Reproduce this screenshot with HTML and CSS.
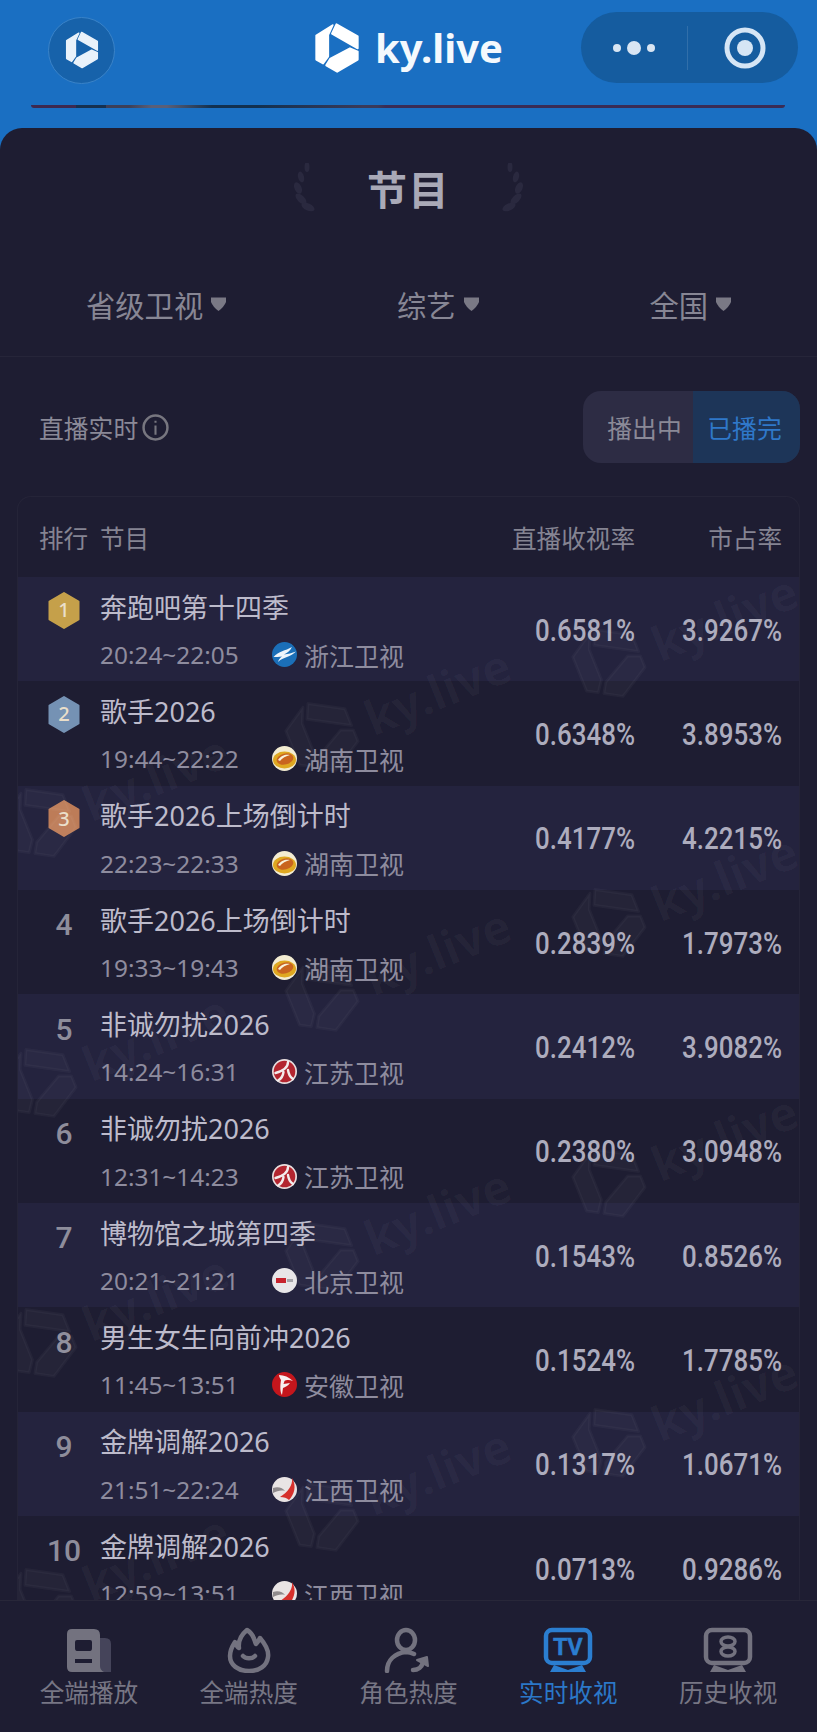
FILE: index.html
```html
<!DOCTYPE html>
<html lang="zh-CN">
<head>
<meta charset="utf-8">
<title>ky.live 节目</title>
<link rel="stylesheet" href="styles.css">
</head>
<body>
<svg class="defs" width="0" height="0" aria-hidden="true">
  <defs>
    <symbol id="logo" viewBox="-4 -4 143 162">
      <g fill="currentColor" stroke="currentColor" stroke-width="6" stroke-linejoin="round">
        <path d="M66 3 L132 41 V78 L52 32 Z"/>
        <path d="M132 88 V113 L68 151 L34 131 L46 111 L108 78 Z"/>
        <path d="M54 6 L3 38 V113 L24 125 L40 103 V36 Z"/>
      </g>
    </symbol>
    <symbol id="hex" viewBox="0 0 32 37">
      <path d="M16 1 L30.5 9.5 V27.5 L16 36 L1.5 27.5 V9.5 Z" fill="currentColor" stroke="currentColor" stroke-linejoin="round" stroke-width="2"/>
    </symbol>
    <symbol id="ch-zj" viewBox="0 0 25 25">
      <circle cx="12.5" cy="12.5" r="12.5" fill="#1b6fb8"/>
      <path d="M1.500 15 C7 9 13 9 20 5 C18 9 15 11 12 12.500 C16 12 20 11 24 9.500 C19 15 11 15 6 20 C7 17 8 16 10 14.500 C7 15 4 15 1.500 15 Z" fill="#eef5fb"/>
    </symbol>
    <symbol id="ch-hn" viewBox="0 0 25 25">
      <circle cx="12.5" cy="12.5" r="12.5" fill="#f3ecd2"/>
      <ellipse cx="12.5" cy="14" rx="11.500" ry="8.500" fill="#dfa821"/>
      <ellipse cx="13" cy="13" rx="8.500" ry="5.500" fill="#c9641f" transform="rotate(-14 13 13)"/>
      <path d="M6 14 C9 9 14 8 18 9 C14 10 10 12 8 15 Z" fill="#f8f1da"/>
    </symbol>
    <symbol id="ch-js" viewBox="0 0 25 25">
      <circle cx="12.5" cy="12.5" r="12.5" fill="#e9dfdf"/>
      <circle cx="12.5" cy="12.5" r="10.800" fill="#b3252f"/>
      <path d="M16 3 C16 9 11 12 3.500 14 M11.500 13 C11 17 9 20 6 21.500 M16 11 C16.500 15 18 18 21 20" fill="none" stroke="#f3ecec" stroke-width="2.400" stroke-linecap="round"/>
    </symbol>
    <symbol id="ch-bj" viewBox="0 0 25 25">
      <circle cx="12.5" cy="12.5" r="12.5" fill="#e8e6e8"/>
      <rect x="4" y="10" width="10" height="5" fill="#c7232d"/>
      <rect x="15" y="11" width="6" height="3" fill="#a5a4a9"/>
    </symbol>
    <symbol id="ch-ah" viewBox="0 0 25 25">
      <circle cx="12.5" cy="12.5" r="12.5" fill="#c4161c"/>
      <path d="M7 3 C12 3 17 5 21 9 C17 7.500 14 8 12.500 9 L11.500 12 L18 11 C16 14 13 15 11 16 L10 23 C8 20 8 14 9 8 C8 6 7 5 7 3 Z" fill="#f7eeee"/>
    </symbol>
    <symbol id="ch-jx" viewBox="0 0 25 25">
      <circle cx="12.5" cy="12.5" r="12.5" fill="#e9e4e4"/>
      <path d="M20 1 C21 8 16 15 8 20 C12 20 15 21 17 23 C22 18 25 9 20 1 Z" fill="#d6302c"/>
      <path d="M1 11 C6 9 11 11 13 14 C9 13 5 14 1 16 Z" fill="#8f8a8c"/>
    </symbol>
  </defs>
</svg>

<div class="app">
  <header class="topbar">
    <div class="topbar-row">
      <div class="avatar"><svg class="avatar-logo"><use href="#logo"/></svg></div>
      <div class="brand">
        <svg class="brand-logo"><use href="#logo"/></svg>
        <span class="brand-text">ky.live</span>
      </div>
      <div class="capsule">
        <div class="capsule-part">
          <svg width="44" height="16" viewBox="0 0 44 16"><circle cx="5" cy="8" r="4" fill="#d8e5f3"/><circle cx="22" cy="8" r="7" fill="#d8e5f3"/><circle cx="39" cy="8" r="4" fill="#d8e5f3"/></svg>
        </div>
        <div class="capsule-sep"></div>
        <div class="capsule-part capsule-target">
          <svg width="42" height="42" viewBox="0 0 42 42"><circle cx="21" cy="21" r="18" fill="none" stroke="#d5e5f5" stroke-width="5"/><circle cx="21" cy="21" r="8" fill="#d5e5f5"/></svg>
        </div>
      </div>
    </div>
    <div class="strip"></div>
  </header>

  <main class="card">
    <div class="title-row">
      <svg class="laurel" viewBox="0 0 24 50"><g fill="#2a293f"><ellipse cx="14" cy="4" rx="2.500" ry="5"/><ellipse cx="8" cy="14" rx="3" ry="5.500" transform="rotate(-15 8 14)"/><ellipse cx="5" cy="25" rx="3.500" ry="6" transform="rotate(-25 5 25)"/><ellipse cx="8" cy="36" rx="3.500" ry="7" transform="rotate(-45 8 36)"/><ellipse cx="15" cy="44" rx="3.500" ry="7" transform="rotate(-65 15 44)"/></g></svg>
      <h1 class="title">节目</h1>
      <svg class="laurel laurel-right" viewBox="0 0 24 50"><g fill="#2a293f"><ellipse cx="14" cy="4" rx="2.500" ry="5"/><ellipse cx="8" cy="14" rx="3" ry="5.500" transform="rotate(-15 8 14)"/><ellipse cx="5" cy="25" rx="3.500" ry="6" transform="rotate(-25 5 25)"/><ellipse cx="8" cy="36" rx="3.500" ry="7" transform="rotate(-45 8 36)"/><ellipse cx="15" cy="44" rx="3.500" ry="7" transform="rotate(-65 15 44)"/></g></svg>
    </div>

    <div class="filters">
      <div class="filter">省级卫视<svg class="caret" viewBox="0 0 17 14"><path d="M1 0.500 H16 V5 Q14 10 8.500 14 Q3 10 1 5 Z" fill="#7a7985"/></svg></div>
      <div class="filter">综艺<svg class="caret" viewBox="0 0 17 14"><path d="M1 0.500 H16 V5 Q14 10 8.500 14 Q3 10 1 5 Z" fill="#7a7985"/></svg></div>
      <div class="filter">全国<svg class="caret" viewBox="0 0 17 14"><path d="M1 0.500 H16 V5 Q14 10 8.500 14 Q3 10 1 5 Z" fill="#7a7985"/></svg></div>
    </div>

    <div class="live-row">
      <div class="live-label">直播实时<svg class="info" viewBox="0 0 26 26"><circle cx="13" cy="13" r="11.500" fill="none" stroke="#77767f" stroke-width="2.400"/><path d="M13 11 V20 M13 6.500 V8.500" stroke="#77767f" stroke-width="2"/></svg></div>
      <div class="toggle">
        <span class="toggle-item toggle-off">播出中</span>
        <span class="toggle-item toggle-on">已播完</span>
      </div>
    </div>

    <section class="table">
      <div class="thead">
        <span class="col-rank">排行</span>
        <span class="col-name">节目</span>
        <span class="col-rate">直播收视率</span>
        <span class="col-share">市占率</span>
      </div>
      <div class="rows">
        <div class="row">
          <div class="rank"><svg class="medal medal-1"><use href="#hex"/></svg><span class="medal-num">1</span></div>
          <div class="info-col"><div class="name">奔跑吧第十四季</div><div class="sub"><span class="time">20:24~22:05</span><svg class="ch"><use href="#ch-zj"/></svg><span>浙江卫视</span></div></div>
          <div class="val col-rate">0.6581%</div><div class="val col-share">3.9267%</div>
        </div>
        <div class="row">
          <div class="rank"><svg class="medal medal-2"><use href="#hex"/></svg><span class="medal-num">2</span></div>
          <div class="info-col"><div class="name">歌手2026</div><div class="sub"><span class="time">19:44~22:22</span><svg class="ch"><use href="#ch-hn"/></svg><span>湖南卫视</span></div></div>
          <div class="val col-rate">0.6348%</div><div class="val col-share">3.8953%</div>
        </div>
        <div class="row">
          <div class="rank"><svg class="medal medal-3"><use href="#hex"/></svg><span class="medal-num">3</span></div>
          <div class="info-col"><div class="name">歌手2026上场倒计时</div><div class="sub"><span class="time">22:23~22:33</span><svg class="ch"><use href="#ch-hn"/></svg><span>湖南卫视</span></div></div>
          <div class="val col-rate">0.4177%</div><div class="val col-share">4.2215%</div>
        </div>
        <div class="row">
          <div class="rank rank-num">4</div>
          <div class="info-col"><div class="name">歌手2026上场倒计时</div><div class="sub"><span class="time">19:33~19:43</span><svg class="ch"><use href="#ch-hn"/></svg><span>湖南卫视</span></div></div>
          <div class="val col-rate">0.2839%</div><div class="val col-share">1.7973%</div>
        </div>
        <div class="row">
          <div class="rank rank-num">5</div>
          <div class="info-col"><div class="name">非诚勿扰2026</div><div class="sub"><span class="time">14:24~16:31</span><svg class="ch"><use href="#ch-js"/></svg><span>江苏卫视</span></div></div>
          <div class="val col-rate">0.2412%</div><div class="val col-share">3.9082%</div>
        </div>
        <div class="row">
          <div class="rank rank-num">6</div>
          <div class="info-col"><div class="name">非诚勿扰2026</div><div class="sub"><span class="time">12:31~14:23</span><svg class="ch"><use href="#ch-js"/></svg><span>江苏卫视</span></div></div>
          <div class="val col-rate">0.2380%</div><div class="val col-share">3.0948%</div>
        </div>
        <div class="row">
          <div class="rank rank-num">7</div>
          <div class="info-col"><div class="name">博物馆之城第四季</div><div class="sub"><span class="time">20:21~21:21</span><svg class="ch"><use href="#ch-bj"/></svg><span>北京卫视</span></div></div>
          <div class="val col-rate">0.1543%</div><div class="val col-share">0.8526%</div>
        </div>
        <div class="row">
          <div class="rank rank-num">8</div>
          <div class="info-col"><div class="name">男生女生向前冲2026</div><div class="sub"><span class="time">11:45~13:51</span><svg class="ch"><use href="#ch-ah"/></svg><span>安徽卫视</span></div></div>
          <div class="val col-rate">0.1524%</div><div class="val col-share">1.7785%</div>
        </div>
        <div class="row">
          <div class="rank rank-num">9</div>
          <div class="info-col"><div class="name">金牌调解2026</div><div class="sub"><span class="time">21:51~22:24</span><svg class="ch"><use href="#ch-jx"/></svg><span>江西卫视</span></div></div>
          <div class="val col-rate">0.1317%</div><div class="val col-share">1.0671%</div>
        </div>
        <div class="row">
          <div class="rank rank-num">10</div>
          <div class="info-col"><div class="name">金牌调解2026</div><div class="sub"><span class="time">12:59~13:51</span><svg class="ch"><use href="#ch-jx"/></svg><span>江西卫视</span></div></div>
          <div class="val col-rate">0.0713%</div><div class="val col-share">0.9286%</div>
        </div>

        <div class="marks" aria-hidden="true">
          <div class="mark-col mark-col-1">
            <div class="mark"><svg class="mark-logo"><use href="#logo"/></svg><span>ky.live</span></div>
            <div class="mark"><svg class="mark-logo"><use href="#logo"/></svg><span>ky.live</span></div>
            <div class="mark"><svg class="mark-logo"><use href="#logo"/></svg><span>ky.live</span></div>
            <div class="mark"><svg class="mark-logo"><use href="#logo"/></svg><span>ky.live</span></div>
          </div>
          <div class="mark-col mark-col-2">
            <div class="mark"><svg class="mark-logo"><use href="#logo"/></svg><span>ky.live</span></div>
            <div class="mark"><svg class="mark-logo"><use href="#logo"/></svg><span>ky.live</span></div>
            <div class="mark"><svg class="mark-logo"><use href="#logo"/></svg><span>ky.live</span></div>
            <div class="mark"><svg class="mark-logo"><use href="#logo"/></svg><span>ky.live</span></div>
          </div>
          <div class="mark-col mark-col-3">
            <div class="mark"><svg class="mark-logo"><use href="#logo"/></svg><span>ky.live</span></div>
            <div class="mark"><svg class="mark-logo"><use href="#logo"/></svg><span>ky.live</span></div>
            <div class="mark"><svg class="mark-logo"><use href="#logo"/></svg><span>ky.live</span></div>
            <div class="mark"><svg class="mark-logo"><use href="#logo"/></svg><span>ky.live</span></div>
          </div>
        </div>
      </div>
    </section>
  </main>

  <nav class="tabbar">
    <div class="tab">
      <svg class="tab-icon" viewBox="0 0 50 46">
        <path d="M34 11 H41 Q47 11 47 17 V45 H36 Z" fill="#45445a"/>
        <path fill-rule="evenodd" d="M8 2 H30 Q36 2 36 8 V39 Q36 43 40 45 H8 Q3 45 3 40 V7 Q3 2 8 2 Z M13 13 Q11 13 11 15 V21 Q11 24 13 24 H26 Q28 24 28 21 V15 Q28 13 26 13 Z M11 32 V36 H28 V32 Z" fill="#73727f"/>
      </svg>
      <span>全端播放</span>
    </div>
    <div class="tab">
      <svg class="tab-icon" viewBox="0 0 50 46" fill="none" stroke="#73727f" stroke-width="4.500" stroke-linecap="round" stroke-linejoin="round">
        <path d="M23 3 C31 8 30 14 32 17 C34 15 35 13 36 11 C42 18 45 24 44 30 C43 39 35 44 25 44 C14 44 6 38 6 29 C6 23 9 18 11 15 C12 18 13 20 15 21 C14 14 17 8 23 3 Z"/>
        <path d="M19 29 C22 32 28 32 31 29"/>
      </svg>
      <span>全端热度</span>
    </div>
    <div class="tab">
      <svg class="tab-icon" viewBox="0 0 50 46" fill="none" stroke="#73727f" stroke-width="4.500" stroke-linecap="round" stroke-linejoin="round">
        <ellipse cx="23" cy="13" rx="9" ry="10"/>
        <path d="M4 44 C4 33 12 26 23 25 C26 25 29 26 31 27"/>
        <path d="M30 43 C35 43 39 40 40 35"/>
        <path d="M34 33 L44 30 L45 39 Z" fill="#73727f" stroke-width="2"/>
      </svg>
      <span>角色热度</span>
    </div>
    <div class="tab tab-on">
      <svg class="tab-icon" viewBox="0 0 50 46">
        <rect x="3" y="3" width="44" height="33" rx="6" fill="none" stroke="#2b7ed0" stroke-width="4.500"/>
        <path d="M11 38 L25 43 L39 38 L43 45 L25 45 L7 45 Z" fill="#2b7ed0"/>
        <text x="25" y="28" class="tv-text">TV</text>
      </svg>
      <span>实时收视</span>
    </div>
    <div class="tab">
      <svg class="tab-icon" viewBox="0 0 50 46" fill="none">
        <rect x="3" y="3" width="44" height="33" rx="6" stroke="#73727f" stroke-width="4.500"/>
        <path d="M11 38 L25 43 L39 38 L43 45 L25 45 L7 45 Z" fill="#73727f"/>
        <ellipse cx="25" cy="14.500" rx="7" ry="4.500" stroke="#73727f" stroke-width="3.500"/>
        <ellipse cx="25" cy="24.500" rx="7" ry="4.500" stroke="#73727f" stroke-width="3.500"/>
      </svg>
      <span>历史收视</span>
    </div>
  </nav>
</div>
</body>
</html>
```

FILE: styles.css
```css
* { box-sizing: border-box; }
html, body { margin: 0; padding: 0; }
body {
  width: 817px;
  height: 1732px;
  overflow: hidden;
  background: #1e1d32;
  font-family: "Noto Sans", "Noto Sans CJK SC", sans-serif;
  color: #8e8d9b;
}
.defs { position: absolute; }
.app { width: 817px; height: 1732px; display: flex; flex-direction: column; background: #1a6fc2; }

/* top bar */
.topbar { height: 128px; flex: none; padding: 12px 20px 0 31px; }
.topbar-row { height: 71px; display: flex; align-items: center; justify-content: space-between; position: relative; }
.avatar {
  width: 67px; height: 67px; margin: 5px 0 0 17px; border-radius: 50%;
  background: #1762aa; border: 1px solid #3a83c8;
  display: flex; align-items: center; justify-content: center;
}
.avatar-logo { width: 34px; height: 40px; color: #e9f2fb; }
.brand { position: absolute; left: 283px; top: 10px; display: flex; align-items: center; gap: 15px; color: #fff; }
.brand-logo { width: 46px; height: 52px; }
.brand-text { font-family: "Noto Sans", sans-serif; font-weight: 700; font-size: 40px; line-height: 52px; color: #f4f9fd; }
.capsule {
  width: 217px; height: 71px; border-radius: 36px; background: #155c9f;
  display: flex; align-items: center; margin-right: -1px;
}
.capsule-part { flex: 1; display: flex; align-items: center; justify-content: center; }
.capsule-target { padding-left: 4px; }
.capsule-sep { width: 1px; height: 44px; background: rgba(255, 255, 255, .12); }
.strip {
  height: 3px; margin: 22px 12px 0 0; border-radius: 0 0 4px 4px;
  background: linear-gradient(90deg, #3d2950 0 6%, #16304f 6% 10%, #3c3f58 10% 13%, #5a5f78 16% 18%, #12304f 24% 30%, #3a3a5a 44% 46%, #3a2c55 47% 100%);
}

/* card */
.card {
  flex: 1; min-height: 0; overflow: hidden; background: #1e1d32;
  border-radius: 22px 22px 0 0;
}
.title-row { height: 124px; display: flex; align-items: center; justify-content: center; gap: 50px; padding-bottom: 4px; }
.title { margin: 0; font-size: 40px; line-height: 48px; font-weight: 700; color: #a9a9b7; letter-spacing: 1.500px; font-family: "Noto Sans CJK SC", sans-serif; }
.laurel { width: 24px; height: 50px; }
.laurel-right { transform: scaleX(-1); }

.filters {
  height: 105px; display: flex; align-items: center; justify-content: space-between;
  padding: 0 85px 0 86px; border-bottom: 1px solid #262539;
  font-size: 29.300px; color: #878694;
}
.filter { display: flex; align-items: center; gap: 7px; }
.caret { width: 17px; height: 14px; }

.live-row {
  display: flex; align-items: center; justify-content: space-between;
  padding: 34px 17px 33px 39px; font-size: 24.800px; color: #8a8997;
}
.live-label { display: flex; align-items: center; gap: 4px; }
.info { width: 27px; height: 27px; }
.toggle { width: 217px; height: 72px; display: flex; border-radius: 18px; overflow: hidden; background: #2d2c44; }
.toggle-item { display: flex; align-items: center; justify-content: center; }
.toggle-off { flex: 1; padding-left: 13px; }
.toggle-on { background: #1d3558; color: #2f78c9; flex: 0 0 107px; padding-right: 4px; }

/* table */
.table { margin: 0 17px; border: 1px solid #252438; border-bottom: 0; border-radius: 14px 14px 0 0; }
.thead { height: 80px; display: flex; align-items: center; padding: 0 17px 0 21px; font-size: 24.600px; color: #858492; }
.thead .col-rank { width: 61px; }
.thead .col-name { flex: 1; }
.col-rate { width: 126px; text-align: right; }
.col-share { width: 147px; text-align: right; }

.rows { position: relative; }
.row {
  height: 104.330px; display: flex; align-items: center; padding-right: 17px;
}
.row:nth-child(odd) { background: #24233e; }
.rank {
  flex: none; width: 82px; height: 40px; align-self: flex-start; margin-top: 15px;
  display: flex; align-items: center; justify-content: center; padding-left: 10px;
  position: relative;
}
.rank-num { font-family: Roboto, sans-serif; font-size: 30px; color: #8e8d9b; font-weight: 500; }
.medal { width: 32px; height: 37px; position: relative; top: -2px; }
.medal-1 { color: #c5a04a; }
.medal-2 { color: #7592b4; }
.medal-3 { color: #bd7c58; }
.medal-num {
  position: absolute; left: 46px; width: 0; display: flex; justify-content: center; top: -2px;
  font-size: 20px; line-height: 40px; color: #eadfca; font-weight: 500;
}
.info-col { flex: 1; min-width: 0; margin-top: 4px; }
.name { font-size: 27px; line-height: 40px; height: 40px; color: #bdbbcb; white-space: nowrap; }
.sub { margin-top: 7px; display: flex; align-items: center; height: 40px; font-size: 25px; color: #8e8c9e; white-space: nowrap; }
.time { width: 172px; font-size: 24.400px; }
.ch { width: 25px; height: 25px; margin-right: 7px; }
.val {
  font-family: Roboto, sans-serif; transform: scaleX(.81); transform-origin: right center;
  font-size: 32px; font-weight: 500; color: #adacbd; margin-top: 1px;
}

/* watermark */
.marks { position: absolute; inset: 0; overflow: hidden; pointer-events: none; }
.mark-col { position: absolute; display: flex; flex-direction: column; gap: 160px; width: 240px; }
.mark-col-1 { left: -19px; top: 164px; }
.mark-col-2 { left: 263px; top: 78px; }
.mark-col-3 { left: 550px; top: 4px; }
.mark {
  height: 100px; display: flex; align-items: center; gap: 12px; transform: rotate(-22deg);
  color: rgba(255, 255, 255, .03); font-size: 48px; font-weight: 700; white-space: nowrap;
}
.mark-logo { width: 70px; height: 80px; flex: none; }

/* tab bar */
.tabbar {
  flex: none; height: 132px; display: flex; padding: 26px 9px 0; background: #1e1d32;
  border-top: 1px solid #282739;
}
.tab { flex: 1; display: flex; flex-direction: column; align-items: center; gap: 4px; font-size: 24.600px; line-height: 32px; color: #777684; }
.tab-on { color: #2b78c8; }
.tab-icon { width: 50px; height: 46px; }
.tv-text { font-family: "Liberation Sans", sans-serif; font-weight: 700; font-size: 23px; fill: #2b7ed0; stroke: #2b7ed0; stroke-width: .6px; text-anchor: middle; }
```
